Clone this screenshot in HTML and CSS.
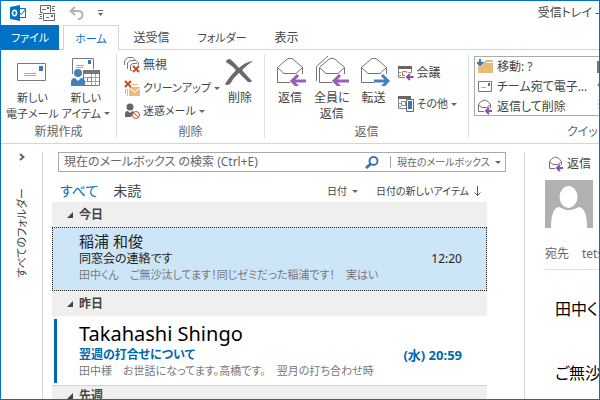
FILE: index.html
```html
<!DOCTYPE html>
<html lang="ja">
<head>
    <meta charset="UTF-8">
    <meta name="viewport" content="width=device-width, initial-scale=1.0">
    <title>受信トレイ</title>
    <link rel="stylesheet" href="styles.css">
</head>
<body>
    <!-- shared icons -->
    <svg class="sprite" aria-hidden="true">
        <symbol id="open-mail" viewBox="0 0 32 32">
            <path d="M3.500 13.500V28.500H16M28.500 13.500V20M3.500 13.500L12 6Q16 2.500 20 6L28.500 13.500L22 19.500H10Z" fill="#fff" stroke="#737373"/>
        </symbol>
        <symbol id="small-reply" viewBox="0 0 16 16">
            <path d="M7 12.500H1.500V5.500L4 2.500Q7.500-.500 11 2.500L13.500 5.500V9M1.500 5.500L5 8.500H10L13.500 5.500" fill="none" stroke="#737373"/>
            <path d="M15 12H9.500M12 9L9 12L12 15" fill="none" stroke="#8c4fb0" stroke-width="2"/>
        </symbol>
        <symbol id="red-x" viewBox="0 0 8 8">
            <path d="M1 1L7 7M7 1L1 7" stroke="#d24726" stroke-width="2" fill="none"/>
        </symbol>
    </svg>

    <div class="window">
        <header class="titlebar">
            <div class="quick">
                <svg width="16" height="16" viewBox="0 0 16 16">
                    <path d="M0 2L10 0V16L0 14Z" fill="#0072c6"/>
                    <path d="M10 3.500H15.500V12.500H10M10 8L11.500 9.500L15.500 4" fill="#fff" stroke="#0072c6"/>
                    <ellipse cx="4.500" cy="8" rx="2" ry="2.700" fill="none" stroke="#fff" stroke-width="1.500"/>
                </svg>
                <button aria-label="送受信">
                    <svg width="17" height="16" viewBox="0 0 17 16" fill="none" stroke="#666">
                        <path d="M11.500 7V.500H1.500V7.500H4M4.500 8.500H15.500V15.500H4.500Z"/>
                        <path d="M13 1.500H16M13 3.500H15M13 5.500H16M0 9.500H3M1 11.500H3M0 13.500H3M3 4.500H7M7 12.500H10"/>
                        <path d="M8 3H10M12 11H14" stroke="#3a78b5" stroke-width="2"/>
                    </svg>
                </button>
                <button aria-label="元に戻す">
                    <svg width="15" height="14" viewBox="0 0 15 14" fill="none" stroke="#b4b4b4" stroke-width="2">
                        <path d="M6 1L1.500 5L6 9M2 5H9Q13.500 5 13.500 9T9 13"/>
                    </svg>
                </button>
                <button aria-label="カスタマイズ">
                    <svg width="7" height="7" viewBox="0 0 7 7"><path d="M1 .500H6" stroke="#666"/><path d="M1 3H6L3.500 6Z" fill="#666"/></svg>
                </button>
            </div>
            <div class="title">受信トレイ -</div>
        </header>

        <nav class="tabs">
            <a href="#" class="tab file kana">ファイル</a>
            <a href="#" class="tab active kana">ホーム</a>
            <a href="#" class="tab">送受信</a>
            <a href="#" class="tab kana">フォルダー</a>
            <a href="#" class="tab">表示</a>
        </nav>

        <div class="ribbon">
            <section class="group create">
                <div class="tools">
                    <button class="big kana">
                        <svg width="32" height="32" viewBox="0 0 32 32">
                            <path d="M1.500 9.500H29.500V26.500H1.500Z" fill="#fff" stroke="#7a7a7a"/>
                            <path d="M8 19.500H20M8 21.500H20" stroke="#aaa"/>
                            <path d="M23 12H27V17H23Z" fill="#3a78b5"/>
                        </svg>
                        新しい<br>電子メール
                    </button>
                    <button class="big kana">
                        <svg width="32" height="32" viewBox="0 0 32 32">
                            <path d="M2.500 20V4.500H23.500V15" fill="#fff" stroke="#7a7a7a"/>
                            <path d="M6 11.500H14M6 13.500H13" stroke="#aaa"/>
                            <path d="M18 6H21V10H18Z" fill="#3a78b5"/>
                            <path d="M13.500 16.500H29.500V31.500H13.500Z" fill="#fff" stroke="#777"/>
                            <path d="M13 16H30V20H13Z" fill="#777"/>
                            <path d="M14 23.500H29M14 27.500H29M21.500 20V31M25.500 20V31" stroke="#aaa"/>
                            <path d="M17.500 23.500H21.500V27.500H17.500Z" fill="#fff" stroke="#e07020"/>
                            <circle cx="8" cy="19" r="4" fill="#4680b8"/>
                            <path d="M1 32V28Q1 24 5 24L8 27L11 24Q15 24 15 28V32Z" fill="#4680b8"/>
                        </svg>
                        新しい<br>アイテム <i class="arrow"></i>
                    </button>
                </div>
                <h2>新規作成</h2>
            </section>

            <section class="group delete">
                <div class="tools">
                    <div class="stack">
                        <button class="small">
                            <svg width="16" height="16" viewBox="0 0 16 16">
                                <path d="M.500 8V4L3.500 .500H9L12 4M3.500 12V6L6 3.500H12L14.500 6V8M8 13.500H6.500V8L9 6.500H13" fill="none" stroke="#777"/>
                                <use href="#red-x" x="8" y="8" width="8" height="8"/>
                            </svg>
                            無視
                        </button>
                        <button class="small kana">
                            <svg width="16" height="16" viewBox="0 0 16 16">
                                <path d="M5 7H16V16H5Z" fill="#e8bc78"/>
                                <path d="M5 8L10.500 12L16 8" fill="none" stroke="#fff"/>
                                <path d="M1.500 9V14M3.500 9V16M8 4.500H14" stroke="#e8bc78"/>
                                <use href="#red-x" x="0" y="0" width="8" height="8"/>
                            </svg>
                            クリーンアップ <i class="arrow"></i>
                        </button>
                        <button class="small kana">
                            <svg width="16" height="16" viewBox="0 0 16 16">
                                <circle cx="6" cy="4" r="3.500" fill="#666"/>
                                <path d="M1 14V11Q1 8 4 8L6 10L8 8L10 9L7 14Z" fill="#666"/>
                                <circle cx="12" cy="12" r="3.500" fill="#fff" stroke="#d24726"/>
                                <path d="M9.500 9.500L14.500 14.500" stroke="#d24726"/>
                            </svg>
                            迷惑メール <i class="arrow"></i>
                        </button>
                    </div>
                    <button class="big">
                        <svg width="32" height="32" viewBox="0 0 32 32">
                            <path d="M2 7Q3 5 6 5Q11 9 15 14Q21 8 29 7Q23 11 18 16Q22 21 28 27Q27 29 24 28Q19 23 15 19Q9 24 6 30Q3 32 1 30Q6 22 12 16Q7 11 2 8Z" fill="#6a6a6a"/>
                        </svg>
                        削除
                    </button>
                </div>
                <h2>削除</h2>
            </section>

            <section class="group respond">
                <div class="tools">
                    <button class="big">
                        <svg width="32" height="32" viewBox="0 0 32 32">
                            <use href="#open-mail" width="32" height="32"/>
                            <path d="M32 27H18M24 21L18 27L24 33" fill="none" stroke="#965fb8" stroke-width="3"/>
                        </svg>
                        返信
                    </button>
                    <button class="big">
                        <svg width="34" height="32" viewBox="0 0 34 32">
                            <path d="M1.500 27V12.500L13 2" fill="none" stroke="#737373"/>
                            <use href="#open-mail" x="1" width="32" height="32"/>
                            <path d="M34 27H19M25 21L19 27L25 33" fill="none" stroke="#965fb8" stroke-width="3"/>
                        </svg>
                        全員に<br>返信
                    </button>
                    <button class="big">
                        <svg width="32" height="32" viewBox="0 0 32 32">
                            <use href="#open-mail" width="32" height="32"/>
                            <path d="M16 27H30M24 21L30 27L24 33" fill="none" stroke="#4680b8" stroke-width="3"/>
                        </svg>
                        転送
                    </button>
                    <div class="stack">
                        <button class="small">
                            <svg width="16" height="16" viewBox="0 0 16 16">
                                <path d="M.500 2.500H13.500V12.500H.500Z" fill="#fff" stroke="#888"/>
                                <path d="M0 1H14V4H0Z" fill="#666"/>
                                <path d="M1 7.500H3M1 10.500H3M10 7.500H13" stroke="#999"/>
                                <path d="M4.500 6.500H8.500V10.500H4.500Z" fill="#fff" stroke="#e07020"/>
                                <path d="M7 8H16V16H7Z" fill="#fff"/>
                                <path d="M15.500 12H9M12 9L9 12L12 15" fill="none" stroke="#8c4fb0" stroke-width="2"/>
                            </svg>
                            会議
                        </button>
                        <button class="small kana">
                            <svg width="16" height="16" viewBox="0 0 16 16">
                                <path d="M.500 1.500H12.500V12.500H.500Z" fill="#fff" stroke="#888"/>
                                <path d="M0 0H13V3H0Z" fill="#666"/>
                                <path d="M1 7.500H3M1 10.500H3" stroke="#999"/>
                                <path d="M3.500 5.500H7.500V9.500H3.500Z" fill="#fff" stroke="#e07020"/>
                                <path d="M8.500 3.500H15.500V15.500H8.500Z" fill="#fff" stroke="#666"/>
                                <path d="M10 5H14V13H10Z" fill="#3a78b5"/>
                            </svg>
                            その他 <i class="arrow"></i>
                        </button>
                    </div>
                </div>
                <h2>返信</h2>
            </section>

            <section class="group steps">
                <div class="gallery">
                    <button class="small">
                        <svg width="16" height="16" viewBox="0 0 16 16">
                            <path d="M1 3H7L9 1H16V14H1Z" fill="#e8bc78"/>
                            <path d="M10 3.500H16" stroke="#fff"/>
                            <path d="M0 0H6V5L3 8L0 5Z" fill="#fff"/>
                            <path d="M3 0V6M0 3L3 6L6 3" fill="none" stroke="#3a78b5" stroke-width="2"/>
                        </svg>
                        移動: ?
                    </button>
                    <button class="small" aria-label="上司に転送">
                        <svg width="16" height="16" viewBox="0 0 16 16"><path d="M1 3H15V13H1Z" fill="none" stroke="#777" stroke-width="2"/></svg>
                    </button>
                    <button class="small">
                        <svg width="16" height="16" viewBox="0 0 16 16">
                            <path d="M1.500 2.500H14.500V12.500H1.500Z" fill="#fff" stroke="#777"/>
                            <path d="M4 8.500H9" stroke="#aaa"/><path d="M11 4H13V7H11Z" fill="#3a78b5"/>
                        </svg>
                        チーム宛て電子…
                    </button>
                    <button class="small" aria-label="完了">
                        <svg width="16" height="16" viewBox="0 0 16 16"><path d="M1 5L6 11L14 2" fill="none" stroke="#777" stroke-width="2"/></svg>
                    </button>
                    <button class="small">
                        <svg width="16" height="16"><use href="#small-reply" width="16" height="16"/></svg>
                        返信して削除
                    </button>
                    <button class="small" aria-label="新規作成">
                        <svg width="16" height="16" viewBox="0 0 16 16"><path d="M0 5H10M5 0V10M1 1L9 9M9 1L1 9" stroke="#e8bc78"/></svg>
                    </button>
                </div>
                <h2>クイック操作</h2>
            </section>
        </div>

        <div class="main">
            <aside class="folders">
                <button aria-label="フォルダー ウィンドウの展開">
                    <svg width="6" height="8" viewBox="0 0 6 8"><path d="M1 1L4.500 4L1 7" fill="none" stroke="#666" stroke-width="2"/></svg>
                </button>
                <span class="folders-label kana">すべてのフォルダー</span>
            </aside>

            <section class="list">
                <form class="search">
                    <input type="text" aria-label="メールボックスの検索" placeholder="現在のメールボックス の検索 (Ctrl+E)">
                    <button type="button" aria-label="検索">
                        <svg width="14" height="13" viewBox="0 0 14 13"><circle cx="8.500" cy="5" r="4" fill="#fff" stroke="#3a78b5" stroke-width="2"/><path d="M5.500 8L1 12" stroke="#3a78b5" stroke-width="3"/></svg>
                    </button>
                    <div class="scope">
                        <select aria-label="検索範囲"><option>現在のメールボックス</option></select>
                        <i class="arrow"></i>
                    </div>
                </form>

                <div class="filters">
                    <button class="filter on">すべて</button>
                    <button class="filter">未読</button>
                    <button class="sort">日付 <i class="arrow"></i></button>
                    <button class="sort">日付の新しいアイテム
                        <svg width="7" height="11" viewBox="0 0 7 11"><path d="M3.500 0V10M.500 6.500L3.500 9.500L6.500 6.500" fill="none" stroke="#555"/></svg>
                    </button>
                </div>

                <div class="mails">
                    <h3>今日</h3>
                    <article class="mail selected">
                        <div class="from">稲浦 和俊</div>
                        <div class="subject"><span>同窓会の連絡です</span><time>12:20</time></div>
                        <div class="preview">田中くん　ご無沙汰してます！同じゼミだった稲浦です！　実はい</div>
                    </article>
                    <h3>昨日</h3>
                    <article class="mail unread">
                        <div class="from">Takahashi Shingo</div>
                        <div class="subject"><span>翌週の打合せについて</span><time>(水) 20:59</time></div>
                        <div class="preview">田中様　お世話になってます。高橋です。　翌月の打ち合わせ時</div>
                    </article>
                    <h3 class="ruled">先週</h3>
                </div>
            </section>

            <section class="reading">
                <button class="small reply">
                    <svg width="16" height="16"><use href="#small-reply" width="16" height="16"/></svg>
                    返信
                </button>
                <svg class="avatar" width="48" height="48" viewBox="0 0 48 48">
                    <path d="M0 0H48V48H0Z" fill="#b1b1b1"/>
                    <path d="M6 48Q6 28 14 27Q24 33 34 27Q42 28 42 48Z" fill="#fff"/>
                    <ellipse cx="23.500" cy="17" rx="10" ry="12" fill="#fff" stroke="#b1b1b1" stroke-width="2"/>
                </svg>
                <div class="to"><span>宛先</span><span>tetsuya</span></div>
                <div class="message">
                    <p>田中くん</p>
                    <p>ご無沙汰してます！</p>
                </div>
            </section>
        </div>
    </div>
</body>
</html>
```
FILE: styles.css
```css
* {
    box-sizing: border-box;
}

body {
    margin: 0;
    font-family: "Noto Sans", "Noto Sans CJK JP", sans-serif;
    font-size: 12px;
    line-height: 16px;
    color: #444;
    font-feature-settings: "palt";
}

button, input, select {
    font: inherit;
    font-feature-settings: inherit;
    color: inherit;
    background: none;
    border: none;
    padding: 0;
    margin: 0;
}

h2, h3, p {
    margin: 0;
    font-size: 12px;
    font-weight: normal;
}

svg {
    display: block;
    flex: none;
}

.sprite {
    display: none;
}

.kana {
    font-size: 11px;
}

.arrow {
    display: inline-block;
    flex: none;
    border: 3px solid transparent;
    border-top-color: #666;
    border-bottom: none;
    vertical-align: 3px;
}

.window {
    display: flex;
    flex-direction: column;
    height: 100vh;
    overflow: hidden;
    border: 1px solid #0072c6;
    background: #fff;
    white-space: nowrap;
}

/* title bar */
.titlebar {
    display: flex;
    flex: none;
    justify-content: space-between;
    align-items: center;
    height: 24px;
    padding-left: 9px;
}

.quick {
    display: flex;
    align-items: center;
    gap: 13px;
}

/* tabs */
.tabs {
    display: flex;
    flex: none;
    height: 25px;
    border-bottom: 1px solid #d4d4d4;
    line-height: 25px;
}

.tab {
    padding: 0 14px;
    color: #444;
    text-decoration: none;
}

.tab.file {
    padding: 0 10px;
    margin-right: 4px;
    height: 25px;
    background: #0072c6;
    color: #fff;
}

.tab.active {
    margin-right: 1px;
    padding: 0 11px;
    height: 25px;
    border: 1px solid #d4d4d4;
    border-bottom: none;
    background: #fff;
    color: #0072c6;
}

/* ribbon */
.ribbon {
    display: flex;
    flex: none;
    height: 94px;
    padding: 4px 0 5px;
    border-bottom: 1px solid #d4d4d4;
}

.group {
    display: flex;
    flex: none;
    flex-direction: column;
    justify-content: space-between;
    border-right: 1px solid #e1e1e1;
}

.group h2 {
    line-height: 12px;
    color: #666;
    text-align: center;
}

.tools {
    display: flex;
    align-items: flex-start;
}

.big {
    display: block;
    line-height: 16px;
    text-align: center;
}

.big svg {
    margin: 0 auto 4px;
}

.small {
    display: flex;
    align-items: center;
    gap: 3px;
}

.stack {
    display: flex;
    flex-direction: column;
}

.create {
    width: 116px;
}

.create .tools {
    gap: 3px;
    padding-left: 5px;
}

.delete {
    width: 148px;
}

.delete .tools {
    gap: 4px;
    padding-left: 7px;
}

.delete .stack {
    gap: 7px;
    padding-top: 3px;
}

.respond {
    width: 204px;
}

.respond .tools {
    gap: 8px;
    padding-left: 9px;
}

.respond .stack {
    gap: 15px;
    padding-top: 11px;
}

.steps {
    flex: 1;
    min-width: 0;
    padding-left: 5px;
    border: none;
}

.gallery {
    display: grid;
    grid-template-columns: 120px 16px;
    row-gap: 4px;
    margin-top: 2px;
    padding: 2px 2px 0;
    border: 1px solid #ababab;
    border-right: none;
    overflow: hidden;
}

.gallery .small {
    gap: 4px;
}

.steps h2 {
    padding-left: 93px;
    text-align: left;
}

/* panes */
.main {
    display: grid;
    flex: 1;
    grid-template-columns: 42px minmax(0, 482px) minmax(0, 1fr);
    min-height: 0;
    padding-top: 8px;
}

.folders {
    display: flex;
    flex-direction: column;
    align-items: center;
    gap: 27px;
    padding-top: 1px;
    border-right: 1px solid #d4d4d4;
}

.folders-label {
    writing-mode: vertical-rl;
    text-orientation: sideways;
    transform: rotate(180deg);
}

.list {
    display: flex;
    flex-direction: column;
    min-height: 0;
    border-right: 1px solid #d4d4d4;
}

.search {
    display: flex;
    flex: none;
    align-items: center;
    height: 20px;
    margin: 0 18px 0 15px;
    padding: 0 4px 0 5px;
    border: 1px solid #a3a9b6;
}

.search input {
    flex: 1;
    min-width: 0;
    outline: none;
}

.search input::placeholder {
    color: #666;
    opacity: 1;
}

.scope {
    display: flex;
    align-items: center;
    justify-content: space-between;
    width: 111px;
    margin-left: 11px;
    padding-left: 6px;
    border-left: 1px solid #a3a9b6;
    font-size: 10px;
    line-height: 12px;
    color: #666;
}

.scope select {
    appearance: none;
}

.filters {
    display: flex;
    flex: none;
    align-items: center;
    height: 30px;
    padding: 8px 43px 0 17px;
}

.filter {
    margin-right: 15px;
    font-size: 14px;
}

.filter.on {
    color: #0072c6;
}

.filter:nth-child(2) {
    margin-right: auto;
}

.sort {
    display: flex;
    align-items: center;
    gap: 5px;
    margin-left: 18px;
    font-size: 10px;
}

.mails {
    min-height: 0;
    margin: 0 37px 0 9px;
    overflow: hidden;
}

.mails h3 {
    display: flex;
    align-items: center;
    gap: 6px;
    height: 25px;
    padding-left: 15px;
    background: #efefef;
    font-weight: bold;
}

.mails h3::before {
    content: "";
    border-left: 6px solid transparent;
    border-bottom: 6px solid #444;
}

.mails h3.ruled {
    height: 20px;
    border-top: 1px solid #d4d4d4;
}

.mail {
    padding: 3px 24px 7px 26px;
}

.mail.selected {
    border: 1px dotted #222;
    background: #cde6f7;
}

.from {
    font-size: 15px;
    line-height: 20px;
    color: #222;
}

.subject {
    display: flex;
    justify-content: space-between;
    color: #222;
}

.preview {
    font-size: 11px;
    color: #777;
}

.unread {
    margin: 3px 2px 2px;
    padding: 1px 23px 4px 22px;
    border-left: 3px solid #0067b0;
}

.unread .from {
    font-size: 20px;
    line-height: 27px;
    color: #000;
}

.unread .subject {
    font-weight: bold;
    color: #0067b0;
}

.unread time {
    font-size: 13px;
}

/* reading pane */
.reading {
    padding: 4px 0 0 20px;
    overflow: hidden;
}

.reading .reply {
    margin-left: 3px;
}

.avatar {
    margin-top: 8px;
}

.to {
    display: flex;
    gap: 13px;
    margin-top: 18px;
    padding-bottom: 7px;
    border-bottom: 1px solid #e1e1e1;
    color: #666;
}

.message {
    padding: 27px 0 0 10px;
    color: #000;
}

.message p {
    margin-bottom: 40px;
    font-size: 16px;
    line-height: 24px;
}
```
